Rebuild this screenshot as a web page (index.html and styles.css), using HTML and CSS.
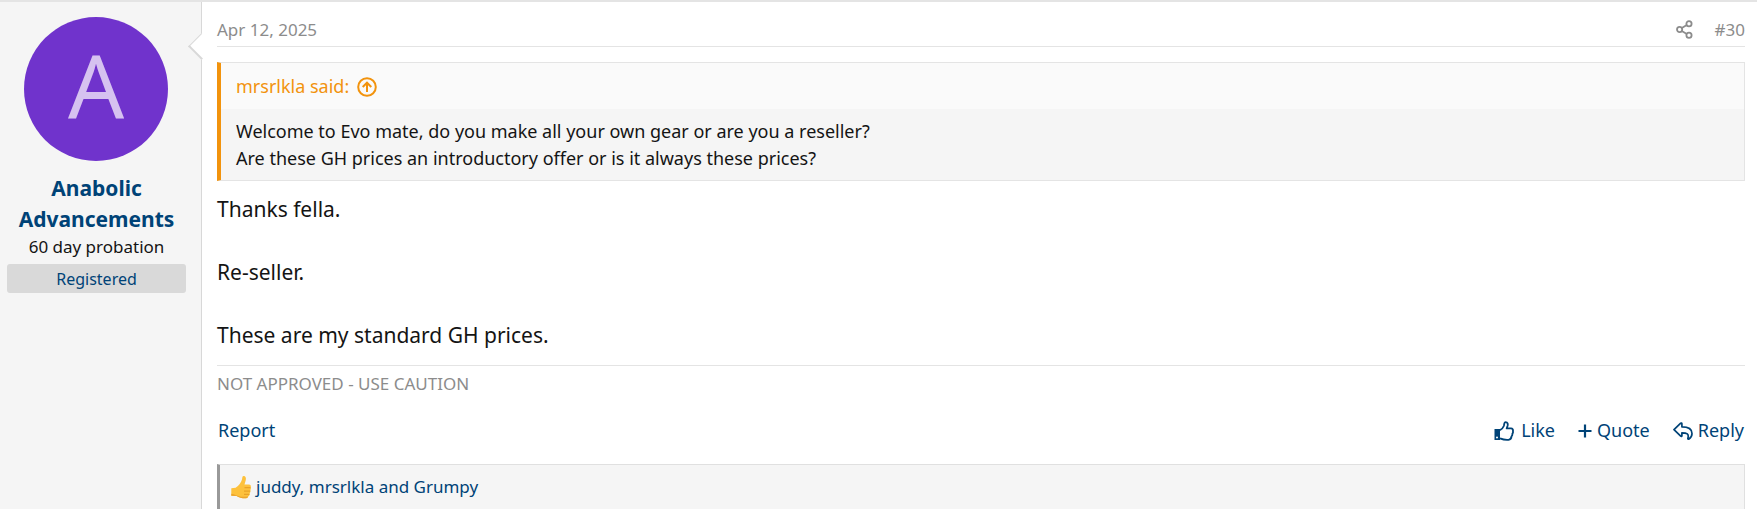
FILE: index.html
```html
<!DOCTYPE html>
<html lang="en">
<head>
	<meta charset="utf-8">
	<meta name="viewport" content="width=device-width, initial-scale=1">
	<title>Post #30</title>
	<link rel="stylesheet" href="styles.css">
</head>

<body>

	<article class="message">

		<section class="message-user">
			<a href="#" class="avatar">A</a>
			<h4 class="message-name"><a href="#">Anabolic Advancements</a></h4>
			<h5 class="user-title">60 day probation</h5>
			<div class="user-banner">Registered</div>
			<span class="message-arrow"></span>
		</section>

		<div class="message-main">

			<header class="message-attribution">
				<a href="#"><time datetime="2025-04-12">Apr 12, 2025</time></a>
				<div class="attribution-opposite">
					<a href="#" aria-label="Share">
						<svg class="icon-share" viewBox="0 0 17 19" fill="none" stroke="currentColor" stroke-width="1.8">
							<circle cx="13" cy="3.7" r="2.6"/>
							<circle cx="3.6" cy="9.5" r="2.6"/>
							<circle cx="13" cy="15.3" r="2.6"/>
							<path d="M5.8 8.1L10.8 5.1M5.8 10.9L10.8 13.9"/>
						</svg>
					</a>
					<a href="#">#30</a>
				</div>
			</header>

			<blockquote class="quote">
				<a href="#" class="quote-title">
					mrsrlkla said:
					<svg class="icon-up" viewBox="0 0 20 20" fill="none" stroke="currentColor" stroke-width="2">
						<circle cx="10" cy="10" r="8.8"/>
						<path d="M10 15V6M5.7 10L10 5.7L14.3 10"/>
					</svg>
				</a>
				<div class="quote-content">
					Welcome to Evo mate, do you make all your own gear or are you a reseller?<br>
					Are these GH prices an introductory offer or is it always these prices?
				</div>
			</blockquote>

			<div class="message-body">
				<p>Thanks fella.</p>
				<p>Re-seller.</p>
				<p>These are my standard GH prices.</p>
			</div>

			<aside class="signature">NOT APPROVED - USE CAUTION</aside>

			<footer class="action-bar">
				<a href="#">Report</a>
				<div class="actions">
					<a href="#" class="action action-like">
						<svg class="icon-like" viewBox="0 0 20 20" fill="none" stroke="currentColor" stroke-width="1.8" stroke-linejoin="round">
							<path fill="currentColor" stroke="none" fill-rule="evenodd" d="M.5 8H6V19H.5ZM3 15.6A1 1 0 1 0 3 17.6A1 1 0 1 0 3 15.6Z"/>
							<path d="M6 9.2C8 8.6 9 6.8 9.8 5C10.3 3.6 10 1.2 11.6 1.2C13.8 1.2 14 3.2 13.6 4.8L12.7 7.4H17C18.6 7.4 19.3 8.7 18.9 10C19.2 11 19 12 18.4 12.7C18.5 14 18.2 14.8 17.5 15.4C17.4 17.6 16.6 18.6 14.5 18.8C11 19.1 9 18.6 6 17.4"/>
						</svg>
						Like
					</a>
					<a href="#" class="action">
						<svg class="icon-plus" viewBox="0 0 14 20" fill="none" stroke="currentColor" stroke-width="2.2">
							<path d="M0.5 10H13.5M7 3.5V16.5"/>
						</svg>
						Quote
					</a>
					<a href="#" class="action">
						<svg class="icon-reply" viewBox="0 0 20 20" fill="none" stroke="currentColor" stroke-width="1.7" stroke-linejoin="round">
							<path d="M1 8.7L7.7 2.2C8.2 1.8 8.9 2 8.9 2.8V5.8C15 5.8 19 7.4 19 12.4C19 15 17.8 16.8 16 18C15.3 18.4 14.7 17.9 14.9 17.2C16.2 13 14 11.8 8.9 11.8V14.7C8.9 15.5 8.2 15.6 7.7 15.2Z"/>
						</svg>
						Reply
					</a>
				</div>
			</footer>

			<div class="reactions">
				<svg class="icon-thumb" viewBox="0 0 20 24">
					<path fill="#fdc13c" d="M12.6 1C14.6 1 15.3 3 14.8 5L13.5 9.6H18C19.5 9.6 20 10.8 19.8 12C20 13 19.9 14.2 19.4 15C19.6 16.4 19.3 17.5 18.7 18.3C18.8 20 18.3 21 17.2 21.5C16.9 22.8 16 23.3 14.7 23.3C10.5 23.3 8 22.6 5.6 21L0.3 20.8V13.2L4.6 12.8C8 11 10 7.6 11 4.6C11.3 3.2 11.2 1 12.6 1Z"/>
					<path fill="none" stroke="#e39a23" stroke-width="1" d="M13.5 12.7H19.4M13 16.1H19.2M13 19.3H18.4"/>
					<path fill="#eba52f" d="M0.3 18.8C4 19 6 21.3 10 21.7C12.5 22 15 21.8 17 21.6C16.8 22.8 16 23.3 14.7 23.3C10.5 23.3 8 22.6 5.6 21L0.3 20.8Z"/>
				</svg>
				<a href="#">juddy, mrsrlkla and Grumpy</a>
			</div>

		</div>
	</article>

</body>

</html>
```

FILE: styles.css
```css
* {
	box-sizing: border-box;
}

body {
	margin: 0;
	background: #fff;
	color: #141414;
	font-family: "Segoe UI", "Noto Sans", "Open Sans", sans-serif;
	font-size: 18px;
	line-height: 27px;
}

a {
	color: #004377;
	text-decoration: none;
}

h4, h5, p, blockquote {
	margin: 0;
}

svg {
	display: block;
	flex: none;
}

.message {
	display: flex;
	min-height: 100vh;
	border-top: 2px solid #e4e4e4;
}

/* user column */
.message-user {
	position: relative;
	flex: none;
	width: 202px;
	padding: 15px 15px 15px 7px;
	border-right: 1px solid #d8d8d8;
	background: #f5f5f5;
	text-align: center;
}

.avatar {
	display: block;
	width: 144px;
	height: 144px;
	margin: 0 auto 12px 17px;
	border-radius: 50%;
	background: #7033cc;
	color: #d6c2f0;
	font-size: 88px;
	line-height: 134px;
}

.message-name {
	font-size: 21px;
	line-height: 31px;
}

.user-title {
	font-size: 17px;
	font-weight: normal;
	line-height: 24px;
}

.user-banner {
	margin-top: 5px;
	padding-top: 2px;
	border-radius: 3px;
	background: #d9d9d9;
	color: #004377;
	font-size: 16px;
	line-height: 27px;
}

.message-arrow {
	position: absolute;
	top: 35px;
	right: -10px;
	width: 19px;
	height: 19px;
	border: solid #d8d8d8;
	border-width: 0 0 2px 1px;
	background: #fff;
	transform: rotate(45deg);
}

/* post column */
.message-main {
	flex: 1;
	min-width: 0;
	display: flex;
	flex-direction: column;
	padding: 14px 12px 0 15px;
}

.message-attribution {
	display: flex;
	justify-content: space-between;
	padding-bottom: 3px;
	border-bottom: 1px solid #e4e4e4;
	font-size: 17px;
}

.message-attribution a {
	color: #8c8c8c;
}

.attribution-opposite {
	display: flex;
	align-items: center;
	gap: 22px;
}

.icon-share {
	width: 17px;
	height: 19px;
}

.quote {
	margin-top: 15px;
	border: 1px solid #e4e4e4;
	border-left: 4px solid #f2930d;
	background: #f5f5f5;
}

.quote-title {
	display: flex;
	align-items: center;
	gap: 8px;
	padding: 10px 15px 9px;
	background: #fafafa;
	color: #f2930d;
}

.icon-up {
	width: 20px;
	height: 20px;
}

.quote-content {
	padding: 9px 15px 8px;
}

.message-body {
	padding: 12px 0 14px;
	font-size: 21px;
	line-height: 32px;
}

.message-body p + p {
	margin-top: 31px;
}

.signature {
	padding-top: 4px;
	border-top: 1px solid #e4e4e4;
	color: #8c8c8c;
	font-size: 17px;
}

.action-bar {
	display: flex;
	justify-content: space-between;
	margin: 20px 1px;
}

.actions {
	display: flex;
	gap: 23px;
}

.action {
	display: flex;
	align-items: center;
	gap: 5px;
}

.action-like {
	gap: 7px;
}

.icon-like,
.icon-reply {
	width: 20px;
	height: 20px;
}

.icon-plus {
	width: 14px;
	height: 20px;
}

.reactions {
	flex: 1;
	display: flex;
	align-items: flex-start;
	gap: 5px;
	padding: 8px 11px 6px;
	border: 1px solid #e0e0e0;
	border-bottom: 0;
	border-left: 3px solid #999;
	background: #f5f5f5;
	font-size: 17px;
}

.icon-thumb {
	width: 20px;
	height: 24px;
	margin-top: 2px;
}
```
